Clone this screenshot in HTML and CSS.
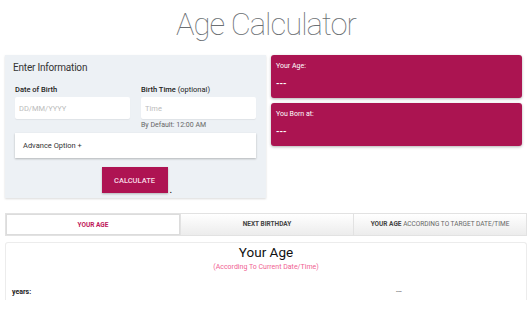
FILE: index.html
```html
<!DOCTYPE html>
<html lang="en">
<head>
    <meta charset="UTF-8">
    <meta name="viewport" content="width=device-width, initial-scale=1.0">
    <title>Age Calculator</title>
    <link rel="stylesheet" href="styles.css">
</head>
<body>
    <h1 class="page-title">Age Calculator</h1>

    <div class="top-row">
        <!-- Input Section -->
        <div class="info-panel">
            <h2>Enter Information</h2>
            <div class="field-grid">
                <div class="field">
                    <label for="dob">Date of Birth</label>
                    <input type="text" id="dob" placeholder="DD/MM/YYYY">
                </div>
                <div class="field">
                    <label for="btime">Birth Time <span class="optional">(optional)</span></label>
                    <input type="text" id="btime" placeholder="Time">
                    <p class="hint">By Default: 12:00 AM</p>
                </div>
            </div>
            <div class="advance-box">Advance Option +</div>
            <div class="button-row">
                <button type="button" class="calc-button">CALCULATE</button><span class="dot">.</span>
            </div>
        </div>

        <!-- Result Cards -->
        <div class="result-column">
            <div class="result-card">
                <p class="result-label">Your Age:</p>
                <p class="result-value">---</p>
            </div>
            <div class="result-card">
                <p class="result-label">You Born at:</p>
                <p class="result-value">---</p>
            </div>
        </div>
    </div>

    <!-- Tabs -->
    <div class="tabs">
        <div class="tab active">YOUR AGE</div>
        <div class="tab">NEXT BIRTHDAY</div>
        <div class="tab">YOUR AGE <span class="light">ACCORDING TO TARGET DATE/TIME</span></div>
    </div>

    <div class="tab-content">
        <h3>Your Age</h3>
        <p class="sub">(According To Current Date/Time)</p>
        <div class="age-row">
            <span class="age-key">years:</span>
            <span class="age-val">---</span>
        </div>
    </div>
</body>
</html>
```

FILE: styles.css
```css
body {
    font-family: Roboto, Arial, sans-serif;
    margin: 0;
    padding: 0 4px 0 5px;
    background: #ffffff;
    color: #333333;
}
.page-title {
    font-size: 31px;
    font-weight: 100;
    letter-spacing: -1px;
    color: #6b6f73;
    text-align: center;
    margin: 0;
    padding-top: 5px;
    height: 50px;
    line-height: 40px;
}
.top-row {
    display: flex;
    gap: 5px;
}
.info-panel {
    width: 261px;
    box-sizing: border-box;
    background: #edf1f5;
    padding: 6px 10px 5px;
    box-shadow: 0 1px 2px rgba(0, 0, 0, 0.15);
}
.info-panel h2 {
    font-size: 10px;
    font-weight: 400;
    letter-spacing: -0.2px;
    margin: 0 0 0 -2px;
    line-height: 14px;
    color: #333;
}
.field-grid {
    display: grid;
    grid-template-columns: 115px 115px;
    column-gap: 11px;
    margin-top: 10px;
}
.field label {
    display: block;
    font-size: 7.5px;
    font-weight: 500;
    line-height: 10px;
    color: #222;
    margin-bottom: 2px;
}
.field .optional {
    font-weight: 400;
}
.field input {
    display: block;
    width: 100%;
    box-sizing: border-box;
    height: 22px;
    border: none;
    border-radius: 2px;
    padding: 0 4px;
    font-family: Roboto, Arial, sans-serif;
    font-size: 7.5px;
    background: #ffffff;
    box-shadow: 0 1px 1px rgba(0, 0, 0, 0.06);
}
.field input::placeholder {
    color: #bbbbbb;
}
.hint {
    font-size: 7px;
    color: #666;
    margin: 1px 0 0;
    line-height: 10px;
}
.advance-box {
    margin-top: 3px;
    height: 25px;
    line-height: 25px;
    background: #ffffff;
    padding: 0 8px;
    font-size: 7.5px;
    color: #333;
    box-shadow: 0 1px 2px rgba(0, 0, 0, 0.25);
}
.button-row {
    display: flex;
    justify-content: center;
    align-items: flex-end;
    margin-top: 9px;
}
.calc-button {
    width: 66px;
    height: 26px;
    border: none;
    background: #ae1352;
    color: #f8dbe6;
    font-family: Roboto, Arial, sans-serif;
    font-size: 7.5px;
    font-weight: 500;
    padding: 0;
    box-shadow: 0 1px 2px rgba(0, 0, 0, 0.25);
}
.dot {
    width: 0;
    font-size: 10px;
    line-height: 6px;
    padding-left: 2px;
    color: #000;
}
.result-column {
    width: 251px;
    display: flex;
    flex-direction: column;
    gap: 5px;
}
.result-card {
    height: 43px;
    box-sizing: border-box;
    background: #ab1451;
    border-radius: 3px;
    padding: 6px 5px;
    color: #ffffff;
    box-shadow: 0 1px 3px rgba(0, 0, 0, 0.3);
}
.result-card p {
    margin: 0;
    font-size: 7px;
    line-height: 10px;
}
.result-card .result-value {
    margin-top: 7px;
    font-size: 9px;
    font-weight: 700;
}
.tabs {
    display: flex;
    margin-top: 15px;
    width: 522px;
    height: 23px;
    border: 1px solid #e2e2e2;
    box-sizing: border-box;
}
.tab {
    flex: 1;
    text-align: center;
    font-size: 6.5px;
    font-weight: 700;
    line-height: 21px;
    color: #444;
    background: linear-gradient(#ffffff, #ececec);
    border-left: 1px solid #e2e2e2;
}
.tab:first-child {
    border-left: none;
}
.tab.active {
    background: #ffffff;
    color: #c0185a;
    border: 1px solid #dcdcdc;
    box-sizing: border-box;
}
.tab .light {
    font-weight: 400;
    color: #666;
}
.tab-content {
    width: 522px;
    height: 58px;
    box-sizing: border-box;
    margin-top: 6px;
    background: #ffffff;
    border: 1px solid #ececec;
    border-bottom: none;
    border-radius: 3px 3px 0 0;
    padding-top: 0;
}
.tab-content h3 {
    margin: 0;
    font-size: 13.5px;
    font-weight: 400;
    text-align: center;
    line-height: 18px;
    color: #111;
}
.tab-content .sub {
    margin: 1px 0 0;
    text-align: center;
    font-size: 7px;
    color: #f06292;
    line-height: 10px;
}
.age-row {
    display: grid;
    grid-template-columns: 75% 25%;
    margin-top: 15px;
    font-size: 7px;
    line-height: 10px;
}
.age-key {
    font-weight: 700;
    padding-left: 6px;
    color: #222;
}
.age-val {
    color: #555;
}
```
